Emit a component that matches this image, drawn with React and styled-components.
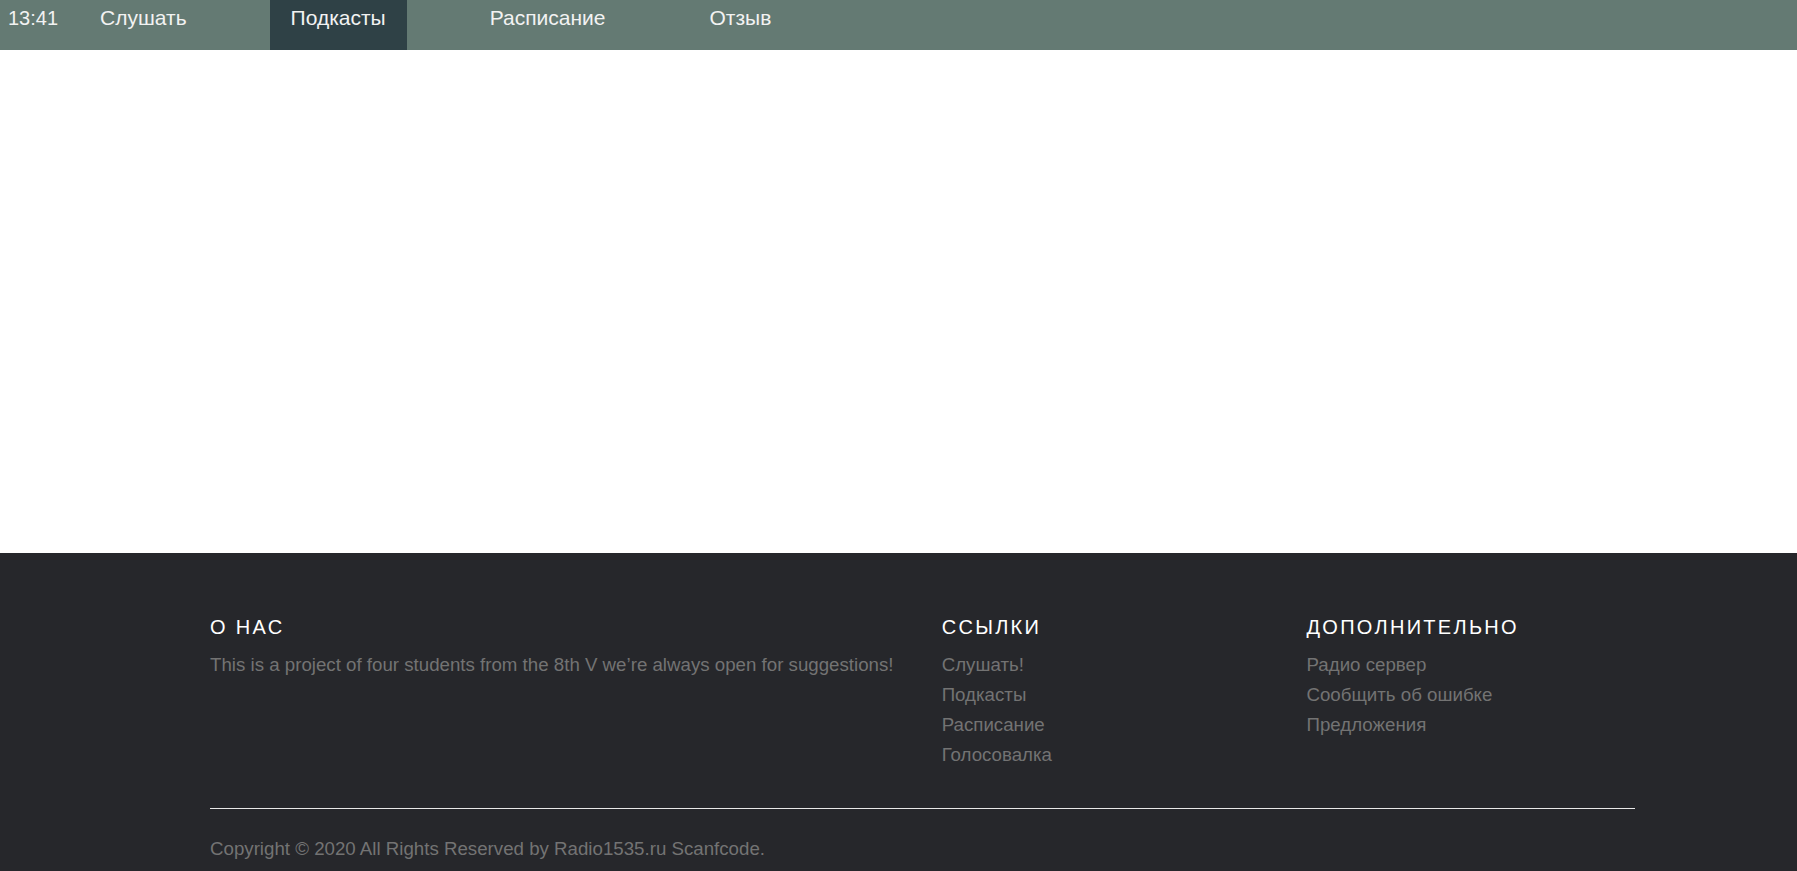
import React from 'react';
import styled, { createGlobalStyle } from 'styled-components';

const GlobalStyle = createGlobalStyle`
  html, body {
    margin: 0;
    padding: 0;
    background: #ffffff;
    font-family: "Liberation Sans", Arial, sans-serif;
  }
`;

const NavBar = styled.nav`
  display: flex;
  align-items: stretch;
  height: 50px;
  background-color: #647a73;
`;

const Clock = styled.span`
  padding: 7px 8px 0 8px;
  font-size: 20px;
  color: #f2f2f2;
`;

const NavLink = styled.a`
  display: block;
  padding: 6px 21px 0 21px;
  margin-left: ${(p) => (p.first ? '13px' : '62px')};
  font-size: 21px;
  color: #f2f2f2;
  text-decoration: none;
  background-color: ${(p) => (p.active ? '#2f4146' : 'transparent')};
`;

const Main = styled.main`
  height: 503px;
`;

const Footer = styled.footer`
  background-color: #26272b;
  padding: 62px 0 8px 210px;
`;

const FooterInner = styled.div`
  width: 1425px;
`;

const Columns = styled.div`
  display: grid;
  grid-template-columns: 731.7px 364.8px 1fr;
`;

const Heading = styled.h6`
  margin: 0 0 11px 0;
  font-size: 20px;
  font-weight: 400;
  line-height: 24px;
  letter-spacing: 2.3px;
  text-transform: uppercase;
  color: #ffffff;
`;

const Text = styled.p`
  margin: 0;
  font-size: 18.7px;
  line-height: 30px;
  color: #737373;
`;

const LinkList = styled.ul`
  list-style: none;
  margin: 0;
  padding: 0;
`;

const LinkItem = styled.li`
  font-size: 18.7px;
  line-height: 30px;

  a {
    color: #737373;
    text-decoration: none;
  }
`;

const Divider = styled.hr`
  margin: 38px 0 25px 0;
  border: none;
  border-top: 1px solid #e8e8e8;
  height: 0;
`;

const Copyright = styled.p`
  margin: 0;
  font-size: 18.7px;
  line-height: 30px;
  color: #737373;
`;

const links = ['Слушать!', 'Подкасты', 'Расписание', 'Голосовалка'];
const extra = ['Радио сервер', 'Сообщить об ошибке', 'Предложения'];

const App = () => {
  return (
    <>
      <GlobalStyle />
      <NavBar>
        <Clock>13:41</Clock>
        <NavLink href="#" first>Слушать</NavLink>
        <NavLink href="#" active>Подкасты</NavLink>
        <NavLink href="#">Расписание</NavLink>
        <NavLink href="#">Отзыв</NavLink>
      </NavBar>
      <Main />
      <Footer>
        <FooterInner>
          <Columns>
            <div>
              <Heading>О нас</Heading>
              <Text>This is a project of four students from the 8th V we’re always open for suggestions!</Text>
            </div>
            <div>
              <Heading>Ссылки</Heading>
              <LinkList>
                {links.map((l) => (
                  <LinkItem key={l}><a href="#">{l}</a></LinkItem>
                ))}
              </LinkList>
            </div>
            <div>
              <Heading>Дополнительно</Heading>
              <LinkList>
                {extra.map((l) => (
                  <LinkItem key={l}><a href="#">{l}</a></LinkItem>
                ))}
              </LinkList>
            </div>
          </Columns>
          <Divider />
          <Copyright>Copyright © 2020 All Rights Reserved by Radio1535.ru Scanfcode.</Copyright>
        </FooterInner>
      </Footer>
    </>
  );
};

export default App;
